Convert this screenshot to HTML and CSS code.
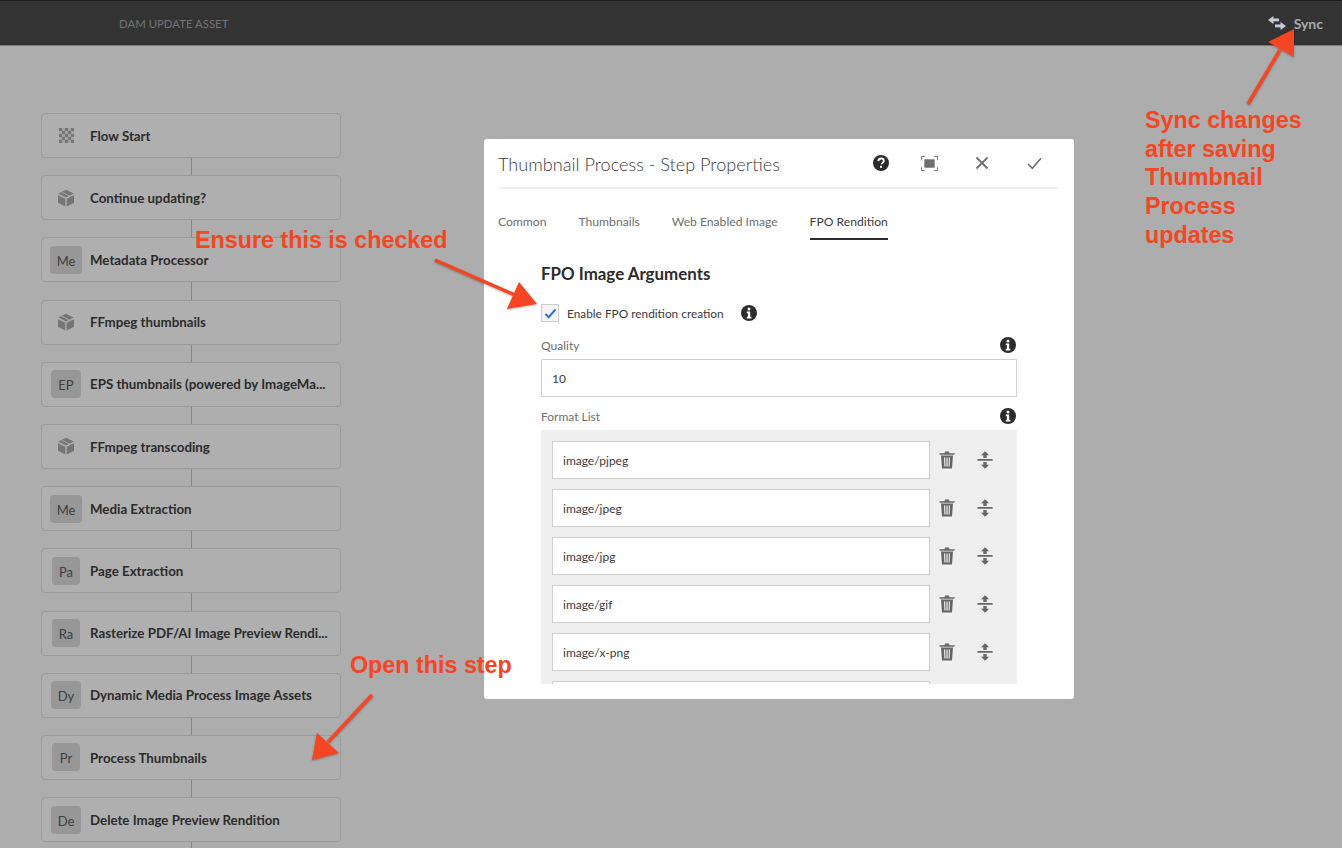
FILE: index.html
```html
<!DOCTYPE html>
<html lang="en">
<head>
  <meta charset="UTF-8">
  <title>DAM Update Asset</title>
  <link rel="stylesheet" href="styles.css">
</head>
<body>
  <svg class="icon-defs" width="0" height="0">
    <symbol id="info" viewBox="0 0 16 16">
      <circle cx="8" cy="8" r="8" fill="#2c2c2c"/>
      <circle cx="8" cy="4.1" r="1.5" fill="#fff"/>
      <path d="M5.800 6.600h3.400v5.200h1.200v1.600H5.800v-1.600h1.100V8.200H5.800z" fill="#fff"/>
    </symbol>
    <symbol id="trash" viewBox="0 0 16 18">
      <path d="M5.500 2.200 6.100.6h3.800l.6 1.600h5v1.600H.5V2.200z" fill="#666"/>
      <path d="M2 4.600h12l-1 13H3zM5 6.500l.4 9h1.100l-.3-9zM7.400 6.500v9h1.200v-9zM9.800 6.500l-.3 9h1.100l.4-9z" fill="#666" fill-rule="evenodd"/>
    </symbol>
    <symbol id="reorder" viewBox="0 0 16 18">
      <path d="M8 .2 12 4.200H9.700V7H6.300V4.200H4zM.4 8.100h15.200v1.700H.4zM6.300 11h3.400v2.800H12l-4 4-4-4h2.300z" fill="#666"/>
    </symbol>
    <symbol id="box" viewBox="0 0 18 18">
      <path d="M1 6.200 8.300 9.800v7.700L1 13.800zM17 6.200v7.600l-7.300 3.700V9.800zM9 .8l7.600 3.800L9 8.600 1.400 4.600z" fill="#757575"/>
      <path d="M4.600 3 12.200 6.900" fill="none" stroke="#afafaf" stroke-width=".9"/>
    </symbol>
    <pattern id="checks" width="6" height="6" patternUnits="userSpaceOnUse">
      <rect width="3" height="3" fill="#757575"/>
      <rect x="3" y="3" width="3" height="3" fill="#757575"/>
      <rect x="3" width="3" height="3" fill="#a2a2a2"/>
      <rect y="3" width="3" height="3" fill="#a2a2a2"/>
    </pattern>
  </svg>

  <!-- Top bar -->
  <header class="topbar">
    <span class="topbar-title">DAM UPDATE ASSET</span>
    <span class="sync">
      <svg class="sync-icon" viewBox="0 0 18 14">
        <path d="M0 4 5.500 0v2.500H11v3H5.500V8z" fill="#c9ced6"/>
        <path d="M18 10 12.500 6v2.500H7v3h5.500V14z" fill="#c9ced6"/>
        <path d="M5.500 5.500H11v.8H5.500zM7 11.500h5.500v.8H7z" fill="#2a4f86"/>
      </svg>
      Sync
    </span>
  </header>

  <!-- Workflow steps -->
  <main class="flow">
    <div class="step">
      <span class="step-icon"><svg class="step-glyph" viewBox="0 0 15 15"><rect width="15" height="15" fill="url(#checks)"/></svg></span>
      <span class="step-name">Flow Start</span>
    </div>
    <div class="connector"></div>
    <div class="step">
      <span class="step-icon"><svg class="step-glyph step-box"><use href="#box"/></svg></span>
      <span class="step-name">Continue updating?</span>
    </div>
    <div class="connector"></div>
    <div class="step">
      <span class="step-icon"><span class="chip">Me</span></span>
      <span class="step-name">Metadata Processor</span>
    </div>
    <div class="connector"></div>
    <div class="step">
      <span class="step-icon"><svg class="step-glyph step-box"><use href="#box"/></svg></span>
      <span class="step-name">FFmpeg thumbnails</span>
    </div>
    <div class="connector"></div>
    <div class="step">
      <span class="step-icon"><span class="chip">EP</span></span>
      <span class="step-name">EPS thumbnails (powered by ImageMa...</span>
    </div>
    <div class="connector"></div>
    <div class="step">
      <span class="step-icon"><svg class="step-glyph step-box"><use href="#box"/></svg></span>
      <span class="step-name">FFmpeg transcoding</span>
    </div>
    <div class="connector"></div>
    <div class="step">
      <span class="step-icon"><span class="chip">Me</span></span>
      <span class="step-name">Media Extraction</span>
    </div>
    <div class="connector"></div>
    <div class="step">
      <span class="step-icon"><span class="chip">Pa</span></span>
      <span class="step-name">Page Extraction</span>
    </div>
    <div class="connector"></div>
    <div class="step">
      <span class="step-icon"><span class="chip">Ra</span></span>
      <span class="step-name">Rasterize PDF/AI Image Preview Rendi...</span>
    </div>
    <div class="connector"></div>
    <div class="step">
      <span class="step-icon"><span class="chip">Dy</span></span>
      <span class="step-name">Dynamic Media Process Image Assets</span>
    </div>
    <div class="connector"></div>
    <div class="step">
      <span class="step-icon"><span class="chip">Pr</span></span>
      <span class="step-name">Process Thumbnails</span>
    </div>
    <div class="connector"></div>
    <div class="step">
      <span class="step-icon"><span class="chip">De</span></span>
      <span class="step-name">Delete Image Preview Rendition</span>
    </div>
    <div class="connector"></div>
  </main>

  <!-- Step properties dialog -->
  <section class="dialog">
    <div class="dialog-head">
      <h1 class="dialog-title">Thumbnail Process - Step Properties</h1>
      <div class="dialog-actions">
        <svg class="action action-help" viewBox="0 0 16 16">
          <circle cx="8" cy="8" r="8" fill="#2c2c2c"/>
          <path d="M5.300 6.100C5.400 4.500 6.500 3.500 8.100 3.500c1.600 0 2.700 1 2.700 2.300 0 1.100-.6 1.700-1.400 2.200-.6.400-.8.700-.8 1.300" fill="none" stroke="#fff" stroke-width="1.800"/>
          <rect x="7" y="10.800" width="2" height="2" fill="#fff"/>
        </svg>
        <svg class="action action-full" viewBox="0 0 18 16">
          <path d="M.5 4V.5H4M14 .5h3.500V4M17.500 12v3.500H14M4 15.500H.5V12" fill="none" stroke="#6e6e6e"/>
          <rect x="3.500" y="3.500" width="11" height="9" fill="#6e6e6e"/>
        </svg>
        <svg class="action action-close" viewBox="0 0 14 14">
          <path d="M1.500 1.500l11 11M12.500 1.500l-11 11" fill="none" stroke="#6e6e6e" stroke-width="1.800"/>
        </svg>
        <svg class="action action-check" viewBox="0 0 14 12">
          <path d="M1 6.500 5 10.500 13 1" fill="none" stroke="#6e6e6e" stroke-width="1.500"/>
        </svg>
      </div>
    </div>

    <nav class="tabs">
      <span class="tab">Common</span>
      <span class="tab">Thumbnails</span>
      <span class="tab">Web Enabled Image</span>
      <span class="tab tab-active">FPO Rendition</span>
    </nav>

    <div class="dialog-body">
      <h2 class="section-title">FPO Image Arguments</h2>

      <div class="check-row">
        <span class="checkbox">
          <svg class="check-mark" viewBox="0 0 14 12"><path d="M1.500 6.500 5 10 12.500 1.500" fill="none" stroke="#2e6fd0" stroke-width="2.200"/></svg>
        </span>
        <span class="check-label">Enable FPO rendition creation</span>
        <svg class="info"><use href="#info"/></svg>
      </div>

      <div class="field-label">
        <span>Quality</span>
        <svg class="info"><use href="#info"/></svg>
      </div>
      <div class="text-input">10</div>

      <div class="field-label field-label-list">
        <span>Format List</span>
        <svg class="info"><use href="#info"/></svg>
      </div>
      <div class="format-list">
        <div class="format-row">
          <div class="text-input format-input">image/pjpeg</div>
          <svg class="row-trash"><use href="#trash"/></svg>
          <svg class="row-reorder"><use href="#reorder"/></svg>
        </div>
        <div class="format-row">
          <div class="text-input format-input">image/jpeg</div>
          <svg class="row-trash"><use href="#trash"/></svg>
          <svg class="row-reorder"><use href="#reorder"/></svg>
        </div>
        <div class="format-row">
          <div class="text-input format-input">image/jpg</div>
          <svg class="row-trash"><use href="#trash"/></svg>
          <svg class="row-reorder"><use href="#reorder"/></svg>
        </div>
        <div class="format-row">
          <div class="text-input format-input">image/gif</div>
          <svg class="row-trash"><use href="#trash"/></svg>
          <svg class="row-reorder"><use href="#reorder"/></svg>
        </div>
        <div class="format-row">
          <div class="text-input format-input">image/x-png</div>
          <svg class="row-trash"><use href="#trash"/></svg>
          <svg class="row-reorder"><use href="#reorder"/></svg>
        </div>
        <div class="format-row">
          <div class="text-input format-input"></div>
        </div>
      </div>
    </div>
  </section>

  <!-- Red annotations on top of the screenshot -->
  <svg class="arrows" viewBox="0 0 1342 848">
    <path class="arrow-shaft" d="M1248 104 1280 50"/>
    <path class="arrow-head" d="M1294 29 1268 42 1294 57z"/>
    <path class="arrow-shaft" d="M435 260 515 295"/>
    <path class="arrow-head" d="M537 304 519 282 507 309z"/>
    <path class="arrow-shaft" d="M372 695 328 742"/>
    <path class="arrow-head" d="M312 760 317 733 339 753z"/>
  </svg>
  <div class="note note-check">Ensure this is checked</div>
  <div class="note note-open">Open this step</div>
  <div class="note note-sync">Sync changes<br>after saving<br>Thumbnail<br>Process<br>updates</div>
</body>
</html>
```

FILE: styles.css
```css
html, body {
  height: 100%;
}

body {
  margin: 0;
  overflow: hidden;
  position: relative;
  background-color: #adadad;
  font-family: "Lato", "Open Sans", sans-serif;
  color: #2c2c2c;
}

.icon-defs {
  position: absolute;
}

/* Top bar */
.topbar {
  height: 44px;
  box-sizing: content-box;
  border-top: 1px solid #1f1f1f;
  border-bottom: 1px solid #7a7a7a;
  background-color: #333333;
  display: flex;
  align-items: center;
  justify-content: space-between;
  padding: 0 19px 0 119px;
}

.topbar-title {
  font-size: 11.400px;
  color: #737373;
}

.sync {
  display: flex;
  align-items: center;
  gap: 8px;
  font-size: 14px;
  font-weight: 700;
  color: #a4abb6;
}

.sync-icon {
  width: 18px;
  height: 14px;
}

/* Workflow steps */
.flow {
  width: 300px;
  margin: 67px 0 0 41px;
  display: flex;
  flex-direction: column;
}

.step {
  height: 43px;
  flex: none;
  display: flex;
  align-items: center;
  border: 1px solid #9b9b9b;
  border-radius: 4px;
  background-color: #afafaf;
}

.step-icon {
  width: 48px;
  flex: none;
  display: flex;
  justify-content: center;
}

.step-glyph {
  width: 15px;
  height: 15px;
}

.step-box {
  width: 18px;
  height: 18px;
}

.chip {
  min-width: 14px;
  height: 28px;
  padding: 0 7px;
  border-radius: 4px;
  background-color: #979797;
  color: #3e3e3e;
  font-size: 13px;
  line-height: 30px;
  text-align: center;
}

.step-name {
  flex: 1;
  min-width: 0;
  padding-top: 0.400px;
  font-size: 13.300px;
  font-weight: 700;
  color: #2b2b2b;
  white-space: nowrap;
}

.connector {
  width: 1px;
  height: 17.200px;
  flex: none;
  margin-left: 150px;
  background-color: #858585;
}

/* Dialog */
.dialog {
  position: absolute;
  left: 484px;
  top: 139px;
  width: 590px;
  height: 560px;
  box-sizing: border-box;
  padding: 0 16px 15px 14px;
  border-radius: 3px;
  background-color: #ffffff;
  display: flex;
  flex-direction: column;
}

.dialog-head {
  height: 48px;
  flex: none;
  display: flex;
  align-items: center;
  justify-content: space-between;
  border-bottom: 2px solid #f0f0f0;
}

.dialog-title {
  margin: 2px 0 0;
  font-size: 18.100px;
  font-weight: 300;
  color: #3c3c3c;
}

.dialog-actions {
  display: flex;
  align-items: center;
  margin-right: 16px;
}

.action-help {
  width: 16px;
  height: 16px;
  margin-right: 32px;
}

.action-full {
  width: 17px;
  height: 15px;
  margin-right: 37px;
}

.action-close {
  width: 14px;
  height: 14px;
  margin-right: 38px;
}

.action-check {
  width: 15px;
  height: 13px;
}

.tabs {
  flex: none;
  display: flex;
  gap: 32px;
  margin-top: 17px;
  font-size: 12.150px;
}

.tab {
  padding: 8px 0 9px;
  color: #6e6e6e;
}

.tab-active {
  color: #3c3c3c;
  border-bottom: 2px solid #2c2c2c;
}

.dialog-body {
  flex: 1;
  min-height: 0;
  overflow: hidden;
  padding: 0 41px 0 43px;
}

.section-title {
  margin: 24px 0 0;
  font-size: 16.900px;
  font-weight: 700;
  line-height: 20px;
  color: #2c2c2c;
}

.check-row {
  display: flex;
  align-items: center;
  margin-top: 20px;
}

.checkbox {
  width: 16px;
  height: 16px;
  border: 1px solid #cdcdcd;
  background-color: #f4f4f4;
  display: flex;
  align-items: center;
  justify-content: center;
}

.check-mark {
  width: 13px;
  height: 11px;
}

.check-label {
  margin: 0 17px 0 8px;
  font-size: 11.850px;
  color: #3c3c3c;
}

.info {
  width: 16px;
  height: 16px;
}

.field-label {
  display: flex;
  align-items: center;
  justify-content: space-between;
  height: 20px;
  margin-top: 13px;
  margin-bottom: 4px;
  padding-right: 1px;
  font-size: 12px;
  color: #6e6e6e;
}

.field-label-list {
  margin-top: 9px;
  margin-bottom: 4px;
}

.text-input {
  height: 36px;
  border: 1px solid #d0d0d0;
  background-color: #ffffff;
  padding-left: 10px;
  font-size: 12px;
  line-height: 38px;
  color: #3c3c3c;
}

.format-list {
  padding: 11px 0 0 11px;
  background-color: #efefef;
}

.format-row {
  display: flex;
  align-items: center;
  margin-bottom: 10px;
}

.format-input {
  width: 366px;
  flex: none;
}

.row-trash {
  width: 16px;
  height: 18px;
  margin-left: 9px;
}

.row-reorder {
  width: 16px;
  height: 18px;
  margin-left: 22px;
}

/* Annotations */
.arrows {
  position: absolute;
  left: 0;
  top: 0;
  width: 1342px;
  height: 848px;
  filter: drop-shadow(0 1px 1px rgba(0, 0, 0, 0.3));
}

.arrow-shaft {
  fill: none;
  stroke: #f54523;
  stroke-width: 3.500;
}

.arrow-head {
  fill: #f54523;
}

.note {
  position: absolute;
  font-family: "Liberation Sans", Arial, sans-serif;
  font-weight: 700;
  font-size: 23.300px;
  line-height: 28.700px;
  color: #f54523;
}

.note-check {
  left: 195px;
  top: 226px;
}

.note-open {
  left: 350px;
  top: 651px;
}

.note-sync {
  left: 1145px;
  top: 106px;
}
```
